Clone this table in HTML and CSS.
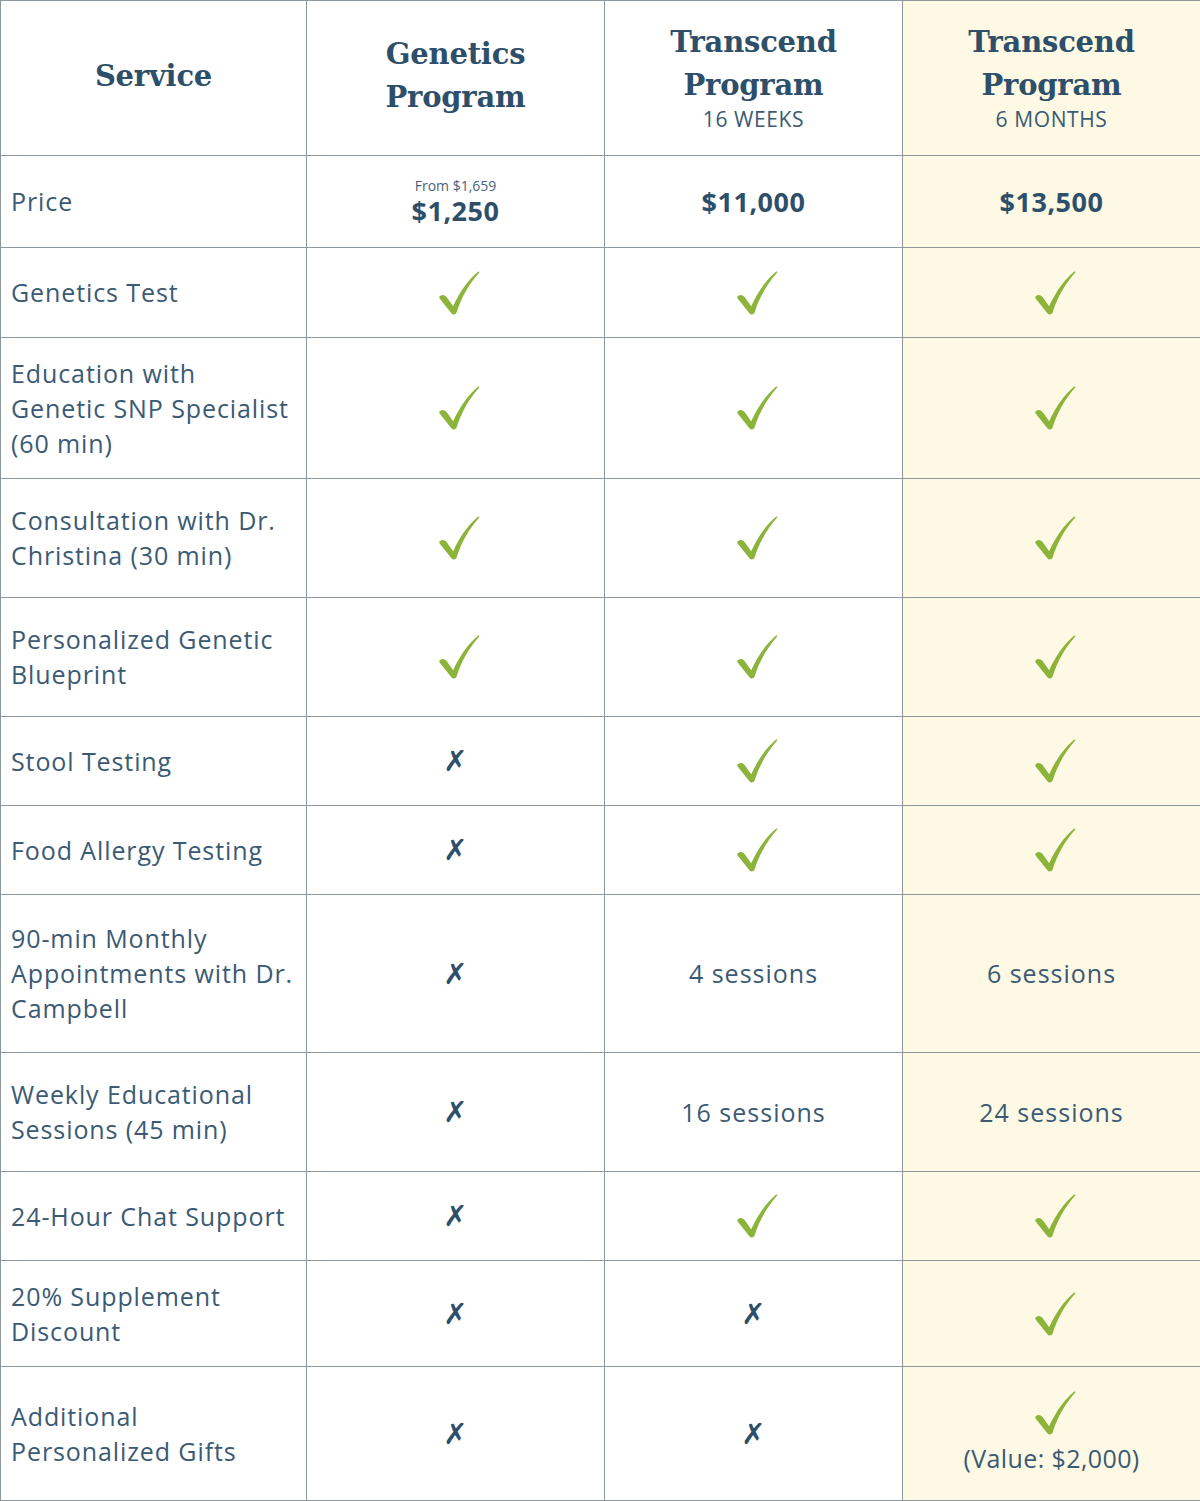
FILE: index.html
```html
<!DOCTYPE html>
<html lang="en">
<head>
<meta charset="utf-8">
<title>Program Comparison</title>
<link rel="stylesheet" href="styles.css">
</head>
<body>
<svg class="defs" width="0" height="0" aria-hidden="true">
  <defs>
    <symbol id="chk" viewBox="0 0 42 44">
      <path d="M1.5 25.5 C3.5 23.2 6.5 23.4 8.6 26 L15.2 35.2 C21.5 21.5 29.5 9.5 40.2 0.6 C41 0 41.8 0.8 41.2 1.6 C31.5 12.5 23.5 26 18.6 41.5 C17.8 43.8 14.8 44.2 13.4 42.2 L2 28 C1.2 27.2 1 26.2 1.5 25.5 Z"/>
    </symbol>
  </defs>
</svg>
<table class="cmp">
  <colgroup>
    <col class="c-svc"><col class="c-p"><col class="c-p"><col class="c-p">
  </colgroup>
  <thead>
    <tr class="r-head">
      <th class="h-svc"><span class="ttl">Service</span></th>
      <th><span class="ttl">Genetics<br>Program</span></th>
      <th><span class="ttl">Transcend<br>Program</span><span class="sub">16 WEEKS</span></th>
      <th class="hl"><span class="ttl">Transcend<br>Program</span><span class="sub">6 MONTHS</span></th>
    </tr>
  </thead>
  <tbody>
    <tr class="r-price">
      <td class="svc">Price</td>
      <td><span class="from">From $1,659</span><span class="amt">$1,250</span></td>
      <td><span class="amt">$11,000</span></td>
      <td class="hl"><span class="amt">$13,500</span></td>
    </tr>
    <tr class="r-90">
      <td class="svc">Genetics Test</td>
      <td><svg class="ck"><use href="#chk"/></svg></td>
      <td><svg class="ck"><use href="#chk"/></svg></td>
      <td class="hl"><svg class="ck"><use href="#chk"/></svg></td>
    </tr>
    <tr class="r-141">
      <td class="svc">Education with Genetic&nbsp;SNP Specialist (60&nbsp;min)</td>
      <td><svg class="ck"><use href="#chk"/></svg></td>
      <td><svg class="ck"><use href="#chk"/></svg></td>
      <td class="hl"><svg class="ck"><use href="#chk"/></svg></td>
    </tr>
    <tr class="r-119">
      <td class="svc">Consultation with Dr. Christina (30 min)</td>
      <td><svg class="ck"><use href="#chk"/></svg></td>
      <td><svg class="ck"><use href="#chk"/></svg></td>
      <td class="hl"><svg class="ck"><use href="#chk"/></svg></td>
    </tr>
    <tr class="r-119">
      <td class="svc">Personalized Genetic Blueprint</td>
      <td><svg class="ck"><use href="#chk"/></svg></td>
      <td><svg class="ck"><use href="#chk"/></svg></td>
      <td class="hl"><svg class="ck"><use href="#chk"/></svg></td>
    </tr>
    <tr class="r-89">
      <td class="svc">Stool Testing</td>
      <td><span class="x">✗</span></td>
      <td><svg class="ck"><use href="#chk"/></svg></td>
      <td class="hl"><svg class="ck"><use href="#chk"/></svg></td>
    </tr>
    <tr class="r-89">
      <td class="svc">Food Allergy Testing</td>
      <td><span class="x">✗</span></td>
      <td><svg class="ck"><use href="#chk"/></svg></td>
      <td class="hl"><svg class="ck"><use href="#chk"/></svg></td>
    </tr>
    <tr class="r-158">
      <td class="svc">90-min Monthly Appointments with Dr. Campbell</td>
      <td><span class="x">✗</span></td>
      <td><span class="txt">4 sessions</span></td>
      <td class="hl"><span class="txt">6 sessions</span></td>
    </tr>
    <tr class="r-119">
      <td class="svc">Weekly Educational Sessions (45 min)</td>
      <td><span class="x">✗</span></td>
      <td><span class="txt">16 sessions</span></td>
      <td class="hl"><span class="txt">24 sessions</span></td>
    </tr>
    <tr class="r-89">
      <td class="svc">24-Hour Chat Support</td>
      <td><span class="x">✗</span></td>
      <td><svg class="ck"><use href="#chk"/></svg></td>
      <td class="hl"><svg class="ck"><use href="#chk"/></svg></td>
    </tr>
    <tr class="r-106">
      <td class="svc">20% Supplement Discount</td>
      <td><span class="x">✗</span></td>
      <td><span class="x">✗</span></td>
      <td class="hl"><svg class="ck"><use href="#chk"/></svg></td>
    </tr>
    <tr class="r-134">
      <td class="svc">Additional Personalized Gifts</td>
      <td><span class="x">✗</span></td>
      <td><span class="x">✗</span></td>
      <td class="hl"><svg class="ck ck-gift"><use href="#chk"/></svg><span class="txt val">(Value: $2,000)</span></td>
    </tr>
  </tbody>
</table>
</body>
</html>
```
FILE: styles.css
```css
html, body {
  margin: 0;
  padding: 0;
  background: #ffffff;
}
.defs {
  position: absolute;
  width: 0;
  height: 0;
  overflow: hidden;
}
.cmp {
  width: 1200px;
  border-collapse: collapse;
  table-layout: fixed;
  font-family: "Open Sans", "DejaVu Sans", sans-serif;
  color: #3b5a74;
}
.c-svc { width: 306px; }
.c-p { width: 298px; }
.cmp th, .cmp td {
  border: 1px solid #8e979e;
  text-align: center;
  vertical-align: middle;
  padding: 0;
}
.cmp td.svc {
  text-align: left;
  padding: 0 4px 0 10px;
  font-size: 25px;
  line-height: 35px;
  letter-spacing: 0.9px;
}
.hl { background: #fdf9e4; }
.r-head { height: 155px; }
.r-price { height: 92px; }
.r-90 { height: 90px; }
.r-89 { height: 89px; }
.r-106 { height: 106px; }
.r-119 { height: 119px; }
.r-134 { height: 134px; }
.r-141 { height: 141px; }
.r-158 { height: 158px; }
.ttl {
  display: block;
  font-family: "DejaVu Serif", "Liberation Serif", serif;
  font-weight: bold;
  font-size: 29px;
  line-height: 43px;
  color: #2e4f6a;
  letter-spacing: -0.2px;
}
.r-head th { padding-bottom: 4px; }
.sub {
  display: block;
  font-size: 21px;
  line-height: 24px;
  letter-spacing: 0.6px;
  color: #3b5a74;
  font-weight: normal;
}
.from {
  display: block;
  font-size: 14px;
  line-height: 18px;
  color: #4a6279;
}
.amt {
  display: block;
  font-size: 27px;
  line-height: 32px;
  font-weight: bold;
  letter-spacing: 0.5px;
  color: #2e4f6a;
}
.ck {
  display: block;
  width: 42px;
  height: 44px;
  margin: 0 auto;
  position: relative;
  left: 3px;
  fill: #8db43a;
}
.x {
  font-family: "DejaVu Sans", sans-serif;
  font-weight: bold;
  font-size: 29px;
  color: #2e4f6a;
}
.txt {
  font-size: 25px;
  line-height: 35px;
  letter-spacing: 1px;
}
.val {
  display: block;
  margin-top: 6px;
  letter-spacing: 0.4px;
}
```
